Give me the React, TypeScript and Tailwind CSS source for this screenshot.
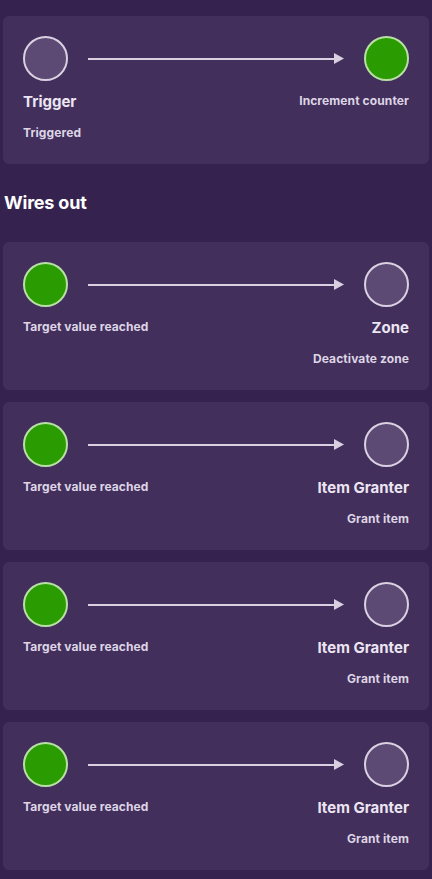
import React from "react";

type Side = { name?: string; event: string; active: boolean };
type Wire = { from: Side; to: Side };

function Dot({ active }: { active: boolean }) {
  return active ? (
    <div className="w-[45px] h-[45px] shrink-0 rounded-full bg-[#2a9b00] border-2 border-[#b8e0a4]" />
  ) : (
    <div className="w-[45px] h-[45px] shrink-0 rounded-full bg-[#5d4a74] border-2 border-[#d9d1e1]" />
  );
}

function Label({ side, align }: { side: Side; align: "left" | "right" }) {
  return (
    <div className={align === "left" ? "flex flex-col items-start" : "flex flex-col items-end"}>
      {side.name ? (
        <>
          <div className="mt-[11px] text-[15px] leading-5 font-bold text-[#ece6f2]">{side.name}</div>
          <div className="mt-[13px] text-[12px] leading-4 font-bold tracking-[0.1px] text-[#ddd5e5]">{side.event}</div>
        </>
      ) : (
        <div className="mt-3 text-[12px] leading-4 font-bold tracking-[0.1px] text-[#ddd5e5]">{side.event}</div>
      )}
    </div>
  );
}

function WireCard({ wire }: { wire: Wire }) {
  return (
    <div className="h-[148px] mx-[3px] rounded-md bg-[#44305d]/95 px-5 pt-5">
      <div className="flex items-center">
        <Dot active={wire.from.active} />
        <div className="flex-1 mx-5 flex items-center">
          <div className="flex-1 h-[2px] bg-[#d9d1e1]" />
          <svg width="10" height="11" viewBox="0 0 10 11" className="shrink-0 -ml-[1px]">
            <polygon points="0,0 10,5.5 0,11" fill="#d9d1e1" />
          </svg>
        </div>
        <Dot active={wire.to.active} />
      </div>
      <div className="flex justify-between">
        <Label side={wire.from} align="left" />
        <Label side={wire.to} align="right" />
      </div>
    </div>
  );
}

const wireIn: Wire = {
  from: { name: "Trigger", event: "Triggered", active: false },
  to: { event: "Increment counter", active: true },
};

const wiresOut: Wire[] = [
  { from: { event: "Target value reached", active: true }, to: { name: "Zone", event: "Deactivate zone", active: false } },
  { from: { event: "Target value reached", active: true }, to: { name: "Item Granter", event: "Grant item", active: false } },
  { from: { event: "Target value reached", active: true }, to: { name: "Item Granter", event: "Grant item", active: false } },
  { from: { event: "Target value reached", active: true }, to: { name: "Item Granter", event: "Grant item", active: false } },
];

export default function App() {
  return (
    <div
      className="w-[432px] h-[879px] overflow-hidden bg-[#36224f] pt-4"
      style={{ fontFamily: "Inter, 'Noto Sans', sans-serif" }}
    >
      <WireCard wire={wireIn} />
      <div className="mt-[27px] mb-[27px] pl-1 text-[18px] leading-6 font-bold tracking-[-0.2px] text-white">Wires out</div>
      <div className="flex flex-col gap-3">
        {wiresOut.map((w, i) => (
          <WireCard key={i} wire={w} />
        ))}
      </div>
    </div>
  );
}
